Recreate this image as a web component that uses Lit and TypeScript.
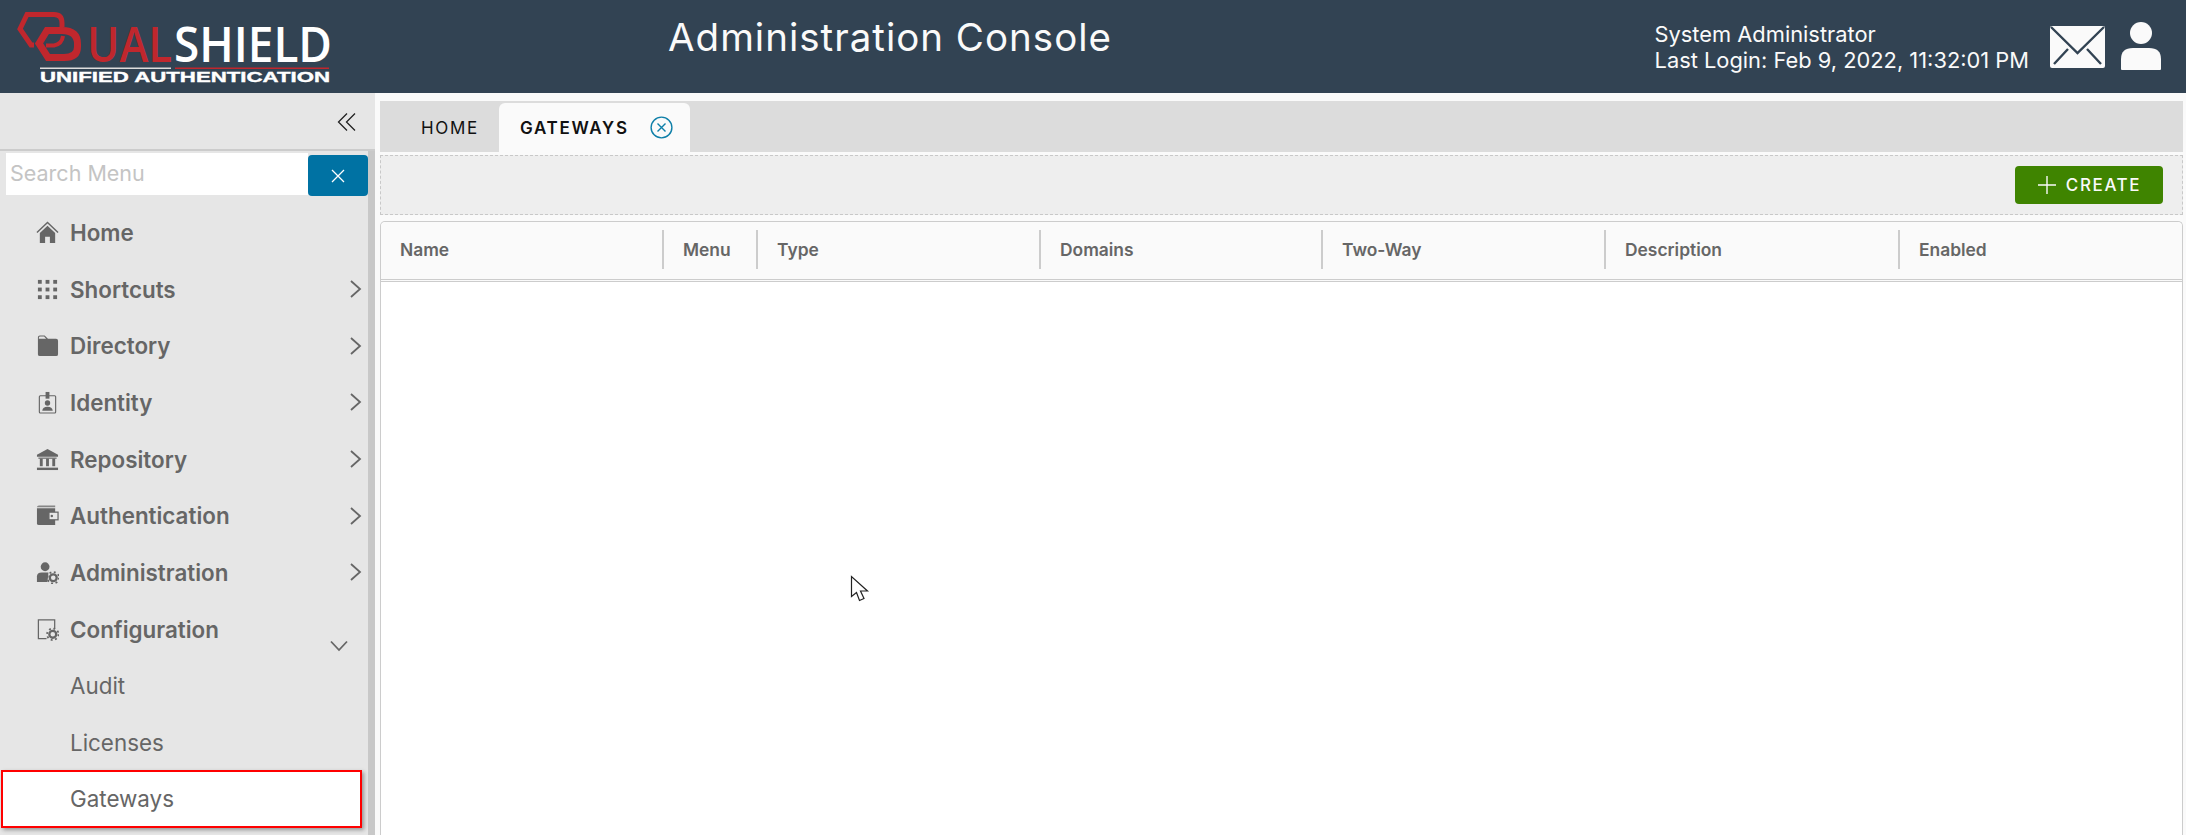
import { LitElement, html, css, svg } from "lit";
import { customElement } from "lit/decorators.js";

const ICONS: Record<string, unknown> = {
  home: svg`<path d="M1 12 L12 1.5 L23 12" fill="none" stroke="currentColor" stroke-width="1.5"/><path d="M4 12.5 L12 5 L20 12.5 V23 H14.5 V16.5 H9.5 V23 H4 Z" fill="currentColor"/>`,
  grid: svg`<g fill="currentColor"><rect x="2" y="2" width="4" height="4"/><rect x="10" y="2" width="4" height="4"/><rect x="18" y="2" width="4" height="4"/><rect x="2" y="10" width="4" height="4"/><rect x="10" y="10" width="4" height="4"/><rect x="18" y="10" width="4" height="4"/><rect x="2" y="18" width="4" height="4"/><rect x="10" y="18" width="4" height="4"/><rect x="18" y="18" width="4" height="4"/></g>`,
  folder: svg`<path d="M2 3.5 Q2 1.5 4 1.5 H9 L12.5 5 H21 Q23 5 23 7 V21 Q23 23 21 23 H4 Q2 23 2 21 Z" fill="currentColor"/><path d="M3 4 Q3 2.6 4.5 2.6 H8.5 L10.5 5 H3 Z" fill="#e6e6e6"/>`,
  id: svg`<rect x="3.5" y="5" width="17" height="18" rx="1" fill="none" stroke="currentColor" stroke-width="1.2"/><rect x="10" y="1" width="4" height="7" fill="currentColor"/><circle cx="12" cy="12.5" r="2.8" fill="currentColor"/><path d="M6.5 20.5 Q7 16.5 12 16.5 Q17 16.5 17.5 20.5 Z" fill="currentColor"/>`,
  bank: svg`<path d="M12 1 L23 7 V9 H1 V7 Z" fill="currentColor"/><rect x="4" y="11" width="3" height="8" fill="currentColor"/><rect x="10.5" y="11" width="3" height="8" fill="currentColor"/><rect x="17" y="11" width="3" height="8" fill="currentColor"/><rect x="1" y="20.5" width="22" height="2.5" fill="currentColor"/><rect x="2.5" y="10" width="19" height="1.2" fill="currentColor"/>`,
  wallet: svg`<path d="M1 3.5 Q1 1.5 3 1.5 H20 V3.5 H1 Z" fill="currentColor" opacity=".75"/><path d="M1 4.5 H20 V22 H3 Q1 22 1 20 Z" fill="currentColor"/><rect x="13.5" y="8.5" width="9.5" height="8" fill="#e6e6e6" stroke="currentColor" stroke-width="1.3"/><circle cx="16.5" cy="12.5" r="1.3" fill="currentColor"/>`,
  admin: svg`<circle cx="9.5" cy="6" r="4.6" fill="currentColor"/><path d="M1 22 V16 Q1 12 6 12 H13 L12 22 Z" fill="currentColor"/><circle cx="18" cy="17.5" r="3.6" fill="none" stroke="currentColor" stroke-width="2.4"/><circle cx="18" cy="17.5" r="6" fill="none" stroke="currentColor" stroke-width="1.8" stroke-dasharray="2 2.7"/>`,
  config: svg`<path d="M11 21.5 H2.5 V2 H19.5 V11" fill="none" stroke="currentColor" stroke-width="1.3"/><circle cx="17.5" cy="17" r="3.6" fill="none" stroke="currentColor" stroke-width="2.4"/><circle cx="17.5" cy="17" r="6" fill="none" stroke="currentColor" stroke-width="1.8" stroke-dasharray="2 2.7"/>`,
};

const NAV = [
  { label: "Home", icon: "home" },
  { label: "Shortcuts", icon: "grid", more: true },
  { label: "Directory", icon: "folder", more: true },
  { label: "Identity", icon: "id", more: true },
  { label: "Repository", icon: "bank", more: true },
  { label: "Authentication", icon: "wallet", more: true },
  { label: "Administration", icon: "admin", more: true },
];

const COLUMNS = [
  { label: "Name", width: 283 },
  { label: "Menu", width: 94 },
  { label: "Type", width: 283 },
  { label: "Domains", width: 282 },
  { label: "Two-Way", width: 283 },
  { label: "Description", width: 294 },
  { label: "Enabled", width: 283 },
];

@customElement("app-root")
export class AppRoot extends LitElement {
  static styles = css`
    :host { display: block; width: 2186px; height: 835px; overflow: hidden; position: relative; background: #fafafa; font-family: Inter, "Open Sans", sans-serif; color: #666; }
    * { box-sizing: border-box; }
    .header { height: 93px; background: #324353; display: flex; align-items: center; color: #fafafa; }
    .logo { width: 340px; height: 93px; flex: none; display: block; }
    .title { margin-left: 328px; font-size: 38.5px; letter-spacing: 1px; font-weight: 400; white-space: nowrap; padding-bottom: 20px; }
    .user { margin-left: auto; font-size: 21.85px; line-height: 26px; white-space: nowrap; }
    .mail { width: 55px; height: 42px; margin: 0 15px 0 21px; display: block; }
    .person { width: 42px; height: 48px; margin-right: 24px; margin-bottom: 2px; display: block; }
    .body { display: flex; height: 742px; }
    .side { width: 375px; flex: none; background: #e6e6e6; display: flex; flex-direction: column; position: relative; }
    .collapse { height: 58px; border-bottom: 2px solid #ccc; display: flex; justify-content: flex-end; align-items: center; padding: 0 18px 0 0; flex: none; }
    .collapse svg { width: 20px; height: 20px; display: block; margin-top: 2px; }
    .scroll { display: flex; flex-direction: column; flex: 1; min-height: 0; border-right: 7px solid #c8c8c8; }
    .search { display: flex; height: 53px; padding: 2px 0 0 6px; flex: none; }
    .search-box { width: 302px; height: 42px; background: #fff; color: #c4c4c4; font-size: 21.5px; padding: 0 4px 2px; display: flex; align-items: center; }
    .search-btn { width: 60px; height: 41px; margin-top: 2px; background: #0072a3; border-radius: 4px; display: flex; align-items: center; justify-content: center; }
    .search-btn svg { width: 14px; height: 14px; display: block; }
    .item { height: 56.7px; display: flex; align-items: center; padding-left: 36px; font-size: 22.4px; font-weight: 600; color: #666; flex: none; white-space: nowrap; }
    .item svg.ic { width: 23px; height: 23px; margin-right: 11px; display: block; flex: none; }
    .item .lbl { flex: 1; }
    .item svg.chev { width: 14px; height: 20px; margin-right: 5px; display: block; flex: none; }
    .item svg.down { width: 18px; height: 12px; margin: 33px 20px 0 0; display: block; flex: none; }
    .sub { padding-left: 70px; font-weight: 400; font-size: 22.4px; }
    .sel { margin: -1px 0 0 1px; width: 361px; height: 58px; background: #fff; border: 2px solid #f00; box-shadow: 2px 2px 4px rgba(0,0,0,.35); padding-left: 67px; }
    .main { flex: 1; min-width: 0; display: flex; flex-direction: column; padding: 8px 3px 0 5px; }
    .tabs { height: 51px; background: #dcdcdc; display: flex; align-items: flex-end; flex: none; font-size: 17px; letter-spacing: 1.7px; color: #111; }
    .tab { height: 49px; display: flex; align-items: center; white-space: nowrap; }
    .tab.home { width: 119px; padding-left: 41px; font-weight: 400; }
    .tab.active { width: 191px; background: #fafafa; border-radius: 6px 6px 0 0; padding-left: 21px; font-weight: 600; }
    .tab svg { width: 23px; height: 23px; margin-left: 21px; display: block; }
    .toolbar { height: 60px; margin-top: 3px; background: #eee; border: 1px dashed #c8c8c8; display: flex; justify-content: flex-end; align-items: center; padding-right: 19px; flex: none; }
    .create { width: 148px; height: 38px; background: #3f8400; border-radius: 4px; color: #fafafa; display: flex; align-items: center; justify-content: center; font-size: 17px; font-weight: 500; letter-spacing: 1.6px; margin-top: -1px; }
    .create svg { width: 20px; height: 20px; margin-right: 9px; display: block; }
    .table { flex: 1; margin-top: 6px; background: #fff; border: 1px solid #ccc; border-bottom: none; border-radius: 5px 5px 0 0; display: flex; flex-direction: column; min-height: 0; }
    .thead { height: 60px; background: #fafafa; display: flex; align-items: center; border-bottom: 3px double #ccc; flex: none; border-radius: 5px 5px 0 0; padding-bottom: 2px; }
    .th { height: 39px; flex: none; display: flex; align-items: center; padding-left: 19px; font-size: 17.4px; font-weight: 600; color: #666; border-right: 2px solid #ccc; white-space: nowrap; }
    .th:last-child { border-right: none; }
    .cursor { position: absolute; left: 850px; top: 575px; width: 21px; height: 29px; display: block; }
  `;

  render() {
    return html`
      <div class="header">
        <svg class="logo" viewBox="0 0 340 93" role="img" aria-label="DualShield logo">
          <g fill="none" stroke="#c0272d" stroke-linejoin="miter">
            <path d="M34 45 H31 L20 29 L27 14.5 H54 Q62 14.5 62 23 V27" stroke-width="5"/>
            <path d="M39 43.5 L47 30.5 H62 Q77.5 30.5 77.5 44 V47 Q77.5 57.5 64 57.5 H48 Z" stroke-width="7"/>
            <path d="M46 45.5 H54 Q62 44 63 36" stroke-width="4"/>
          </g>
          <text x="87" y="62" font-family="Open Sans" font-weight="600" font-size="49" fill="#c0272d" textLength="85" lengthAdjust="spacingAndGlyphs">UAL</text>
          <text x="174" y="62" font-family="Open Sans" font-weight="600" font-size="49" fill="#fff" textLength="158" lengthAdjust="spacingAndGlyphs">SHIELD</text>
          <rect x="40" y="67.5" width="131" height="1.5" fill="#ddd"/>
          <rect x="175" y="67.5" width="154" height="1.5" fill="#c0272d"/>
          <text x="40" y="82" font-family="Liberation Sans" font-weight="700" font-size="15.5" fill="#fff" stroke="#fff" stroke-width=".4" textLength="290" lengthAdjust="spacingAndGlyphs">UNIFIED AUTHENTICATION</text>
        </svg>
        <div class="title">Administration Console</div>
        <div class="user">System Administrator<br />Last Login: Feb 9, 2022, 11:32:01 PM</div>
        <svg class="mail" viewBox="0 0 55 42">
          <rect width="55" height="42" rx="2" fill="#fafafa"/>
          <path d="M1 1 L27.5 27 L54 1" fill="none" stroke="#324353" stroke-width="2.4"/>
          <path d="M4 38 L18 23 M51 38 L37 23" fill="none" stroke="#324353" stroke-width="2.4"/>
        </svg>
        <svg class="person" viewBox="0 0 42 48">
          <circle cx="21" cy="11" r="11" fill="#fafafa"/>
          <path d="M1 47 V37 Q1 26 13 26 H29 Q41 26 41 37 V47 Q41 48 40 48 H2 Q1 48 1 47 Z" fill="#fafafa"/>
        </svg>
      </div>
      <div class="body">
        <div class="side">
          <div class="collapse">
            <svg viewBox="0 0 20 20" fill="none" stroke="#222" stroke-width="1.3"><path d="M10 1.5 L1.5 10 L10 18.5 M18 1.5 L9.5 10 L18 18.5"/></svg>
          </div>
          <div class="scroll">
            <div class="search">
              <div class="search-box">Search Menu</div>
              <div class="search-btn"><svg viewBox="0 0 14 14" stroke="#fff" stroke-width="1.3"><path d="M1 1 L13 13 M13 1 L1 13"/></svg></div>
            </div>
            ${NAV.map(n => html`
              <div class="item">
                <svg class="ic" viewBox="0 0 24 24">${ICONS[n.icon]}</svg>
                <span class="lbl">${n.label}</span>
                ${n.more ? html`<svg class="chev" viewBox="0 0 14 20" fill="none" stroke="#666" stroke-width="1.8"><path d="M2 2 L11 10 L2 18"/></svg>` : ""}
              </div>`)}
            <div class="item">
              <svg class="ic" viewBox="0 0 24 24">${ICONS.config}</svg>
              <span class="lbl">Configuration</span>
              <svg class="down" viewBox="0 0 18 12" fill="none" stroke="#666" stroke-width="1.8"><path d="M1 1.5 L9 10 L17 1.5"/></svg>
            </div>
            <div class="item sub">Audit</div>
            <div class="item sub">Licenses</div>
            <div class="item sub sel">Gateways</div>
          </div>
        </div>
        <div class="main">
          <div class="tabs">
            <div class="tab home">HOME</div>
            <div class="tab active">GATEWAYS
              <svg viewBox="0 0 23 23" fill="none" stroke="#0e7fa8" stroke-width="1.4"><circle cx="11.5" cy="11.5" r="10.4"/><path d="M7.5 7.5 L15.5 15.5 M15.5 7.5 L7.5 15.5"/></svg>
            </div>
          </div>
          <div class="toolbar">
            <div class="create">
              <svg viewBox="0 0 20 20" stroke="#fafafa" stroke-width="1.4"><path d="M10 1 V19 M1 10 H19"/></svg>CREATE
            </div>
          </div>
          <div class="table">
            <div class="thead">
              ${COLUMNS.map(c => html`<div class="th" style="width:${c.width}px">${c.label}</div>`)}
            </div>
          </div>
        </div>
      </div>
      <svg class="cursor" viewBox="0 0 21 29">
        <path d="M1.5 1.5 V21.5 L6.5 17.5 L9.5 25.5 L14 23.5 L10.5 16 L17.5 16 Z" fill="#fff" stroke="#222" stroke-width="1.2"/>
      </svg>
    `;
  }
}
